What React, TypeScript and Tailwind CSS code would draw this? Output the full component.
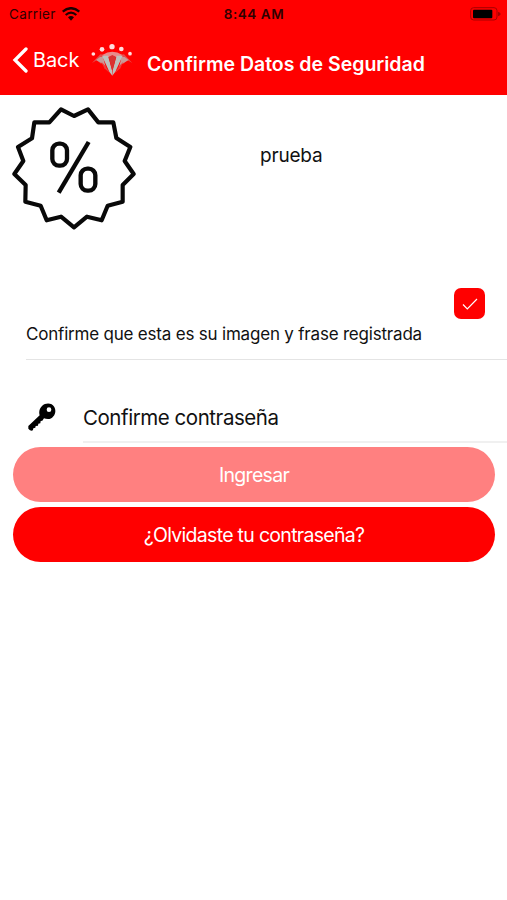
import type { ReactNode } from 'react';
import clsx from 'clsx';

function WifiIcon() {
  return (
    <svg viewBox="0 0 54 42" className="h-[14px] w-[18px]" fill="none" stroke="#1c0000">
      <path d="M2 14Q27-7 52 14" strokeWidth="7" />
      <path d="M11 24Q27 10 43 24" strokeWidth="6.5" />
      <path d="M18 31Q27 23 36 31L27 41Z" fill="#1c0000" stroke="none" />
    </svg>
  );
}

function BatteryIcon() {
  return (
    <svg viewBox="0 0 93 42" className="h-[14px] w-[31px]">
      <rect x="2" y="2" width="79" height="37" rx="9" fill="none" stroke="#a80000" strokeWidth="3" />
      <rect x="9" y="8" width="58" height="26" rx="3" fill="#000" />
      <path d="M84 14Q92 17 92 21T84 28Z" fill="#a80000" />
    </svg>
  );
}

function BrandLogo() {
  return (
    <svg viewBox="0 0 126 102" className="h-[34px] w-[42px]">
      <g fill="#ffdede">
        <circle cx="7" cy="33" r="5.5" />
        <circle cx="33" cy="19" r="7" />
        <circle cx="63" cy="11" r="8" />
        <circle cx="91" cy="18" r="7" />
        <circle cx="117" cy="32" r="5.5" />
      </g>
      <path d="M3 60L28 34L44 36L30 62L17 52Z" fill="#e84a4a" />
      <path d="M124 60L99 34L83 36L97 62L110 52Z" fill="#e84a4a" />
      <path d="M34 36Q64 16 94 36L80 44L64 38L48 44Z" fill="#e88b8b" />
      <path d="M27 42L15 51L31 60L44 72L36 42Z" fill="#c99a98" />
      <path d="M101 42L113 51L97 60L84 72L92 42Z" fill="#c99a98" />
      <path d="M31 56L44 70L56 90L40 76Z" fill="#ee3a3a" />
      <path d="M97 56L84 70L72 90L88 76Z" fill="#ee3a3a" />
      <path d="M33 38L51 38L63 82L64 98L55 86Z" fill="#bdc0bd" />
      <path d="M95 38L77 38L65 82L64 98L73 86Z" fill="#bdc0bd" />
      <path d="M53 42L64 84L75 42L64 36Z" fill="#d93232" />
    </svg>
  );
}

function DiscountBadge() {
  return (
    <svg viewBox="0 0 372 372" className="h-[124px] w-[124px]" fill="none" stroke="#090909">
      <path
        d="M147 10L186 30L228 10L259 49H304L313 96L355 123L338 165L365 204L332 237L332 287L287 299L269 343L225 332L186 364L147 332L104 343L86 299L40 287L41 237L7 204L34 165L18 123L60 97L67 49H112Z"
        strokeWidth="12.5"
        strokeLinejoin="round"
      />
      <rect x="121" y="113" width="44" height="66" rx="20" strokeWidth="13" />
      <rect x="206" y="188" width="44" height="66" rx="20" strokeWidth="13" />
      <path d="M230 108L140 260" strokeWidth="13" />
    </svg>
  );
}

function KeyIcon() {
  return (
    <svg viewBox="0 0 84 84" className="h-7 w-7">
      <path
        d="M42 9C54-2 72 0 79 12C88 28 76 48 60 48C55 48 51 47 48 46L43 53L38 54L37 61L31 62L30 68L23 69L22 74L16 76L15 81Q12 85 6 82L1 77V69L35 37C32 28 34 16 42 9ZM63 13A7 7 0 1 0 63 27A7 7 0 1 0 63 13Z"
        fill="#000"
        fillRule="evenodd"
      />
    </svg>
  );
}

function PillButton({ children, disabled }: { children: ReactNode; disabled?: boolean }) {
  return (
    <button
      type="button"
      disabled={disabled}
      className={clsx(
        'flex h-[55px] w-full items-center justify-center rounded-full pt-[3px] text-[19.5px] tracking-[-0.7px] text-white',
        disabled ? 'bg-[#ff8080]' : 'bg-[#ff0000]'
      )}
    >
      {children}
    </button>
  );
}

export default function App() {
  return (
    <main className="h-[900px] w-full overflow-hidden bg-white font-['Inter',sans-serif] text-[#111]">
      <header className="h-[95px] bg-[#ff0000]">
        <div className="grid h-7 grid-cols-3 items-center pr-1.5 pl-[9px] text-[13.5px] leading-none text-[#300000]">
          <div className="flex items-center gap-1.5">
            <span className="pt-0.5 tracking-[0.35px]">Carrier</span>
            <WifiIcon />
          </div>
          <span className="pt-0.5 pr-0.5 text-center font-semibold tracking-[0.55px]">8:44 AM</span>
          <div className="flex justify-end">
            <BatteryIcon />
          </div>
        </div>
        <nav className="flex h-[67px] items-start pl-3 text-white">
          <svg viewBox="0 0 16 26" className="mt-[19px] h-[26px] w-4" fill="none" stroke="currentColor">
            <path d="M14 2L3 13L14 24" strokeWidth="3.3" strokeLinecap="round" strokeLinejoin="miter" />
          </svg>
          <span className="mt-[18px] ml-[5px] w-[58px] text-[20px] leading-7 tracking-[-0.1px]">Back</span>
          <div className="mt-[15px] w-14">
            <BrandLogo />
          </div>
          <h1 className="mt-[22px] text-[19.5px] leading-7 font-semibold whitespace-nowrap">
            Confirme Datos de Seguridad
          </h1>
        </nav>
      </header>

      <section className="flex h-[185px] items-start pt-[11px] pl-3">
        <DiscountBadge />
        <p className="mt-9 ml-[124px] text-[19px] leading-7 tracking-[-0.2px]">prueba</p>
      </section>

      <section className="ml-[26px] h-[80px] border-b border-[#e4e4e4] pt-2">
        <div className="flex justify-end pr-[22px]">
          <span role="checkbox" aria-checked="true" className="flex h-[31px] w-[31px] items-center justify-center rounded-[7px] bg-[#ff0000]">
            <svg viewBox="0 0 16 12" className="h-3 w-4" fill="none" stroke="#fff" strokeWidth="1.2">
              <path d="M1 6.5L5.3 10.8L15 1" />
            </svg>
          </span>
        </div>
        <p className="mt-[3px] text-[17px] leading-6 tracking-[-0.2px] whitespace-nowrap">
          Confirme que esta es su imagen y frase registrada
        </p>
      </section>

      <section className="mt-[35px] flex h-[48px] pl-7">
        <div className="mt-2 w-[55px]">
          <KeyIcon />
        </div>
        <label className="flex-1 border-b-2 border-[#f0f0f0] pt-[9px] text-[20.5px] leading-7 tracking-[-0.45px]">
          Confirme contraseña
        </label>
      </section>

      <section className="mt-1 flex flex-col gap-[5px] pr-3 pl-[13px]">
        <PillButton disabled>Ingresar</PillButton>
        <PillButton>¿Olvidaste tu contraseña?</PillButton>
      </section>
    </main>
  );
}
